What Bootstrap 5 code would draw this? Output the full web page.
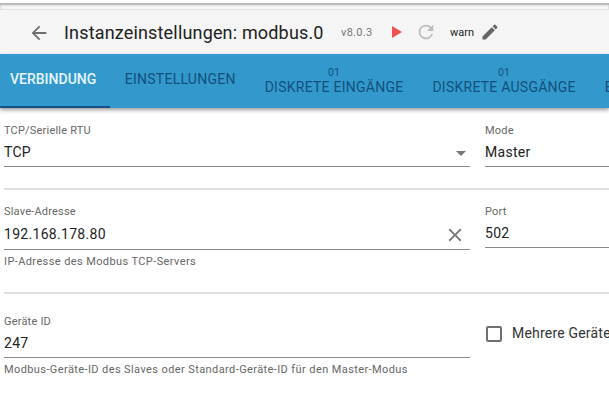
<!DOCTYPE html>
<html lang="de">
<head>
  <meta charset="UTF-8">
  <meta name="viewport" content="width=device-width, initial-scale=1.0">
  <title>Instanzeinstellungen</title>
  <link href="https://cdn.jsdelivr.net/npm/bootstrap@5.3.0/dist/css/bootstrap.min.css" rel="stylesheet">
  <style>
    html, body {
      height: 100%;
      overflow: hidden;
      background: #fff;
      font-family: Roboto, "Liberation Sans", sans-serif;
    }
    .top-strip {
      height: 10px;
      background: #f5f5f5;
      border-top: 3px solid #fff;
      border-bottom: 1px solid #e2e2e2;
      box-shadow: inset 0 2px 2px #b0b0b0;
    }
    .title-bar {
      height: 44px;
      background: #f5f5f5;
      padding-left: 28px;
      color: #212121;
    }
    .back-icon { margin-top: 2px; }
    .title-text { font-size: 18px; letter-spacing: .17px; margin-left: 14px; width: 277px; white-space: nowrap; }
    .version { font-size: 11px; letter-spacing: .3px; color: #777; width: 50px; margin-top: 2px; }
    .reload-icon { margin-left: 12px; }
    .log-level { font-size: 11px; color: #222; margin-left: 13px; margin-top: 2px; }
    .edit-icon { margin-left: 6px; }
    .tab-strip {
      height: 54px;
      background: #3399cc;
      box-shadow: 0 2px 4px rgba(0, 0, 0, .4);
      margin-bottom: 15px;
      white-space: nowrap;
      overflow: hidden;
    }
    .tab-item {
      height: 54px;
      flex: none;
      padding: 0 14.5px;
      font-size: 14px;
      line-height: 16px;
      letter-spacing: .25px;
      text-transform: uppercase;
      color: #14507c;
      text-align: center;
    }
    .tab-item.first-tab {
      padding: 0 14px 0 10px;
      color: #e6f6ff;
      font-weight: 500;
      letter-spacing: 0;
      border-bottom: 2px solid #164f86;
    }
    .tab-num { font-size: 10.5px; line-height: 11px; display: block; padding-top: 13px; margin-bottom: 1px; }
    .tab-plain { padding-top: 17px; display: block; }
    .form-area { padding-left: 4px; }
    .field-left { width: 466px; flex: none; }
    .field-right { width: 140px; margin-left: 15px; flex: none; }
    .field-label { font-size: 11px; line-height: 14px; height: 14px; padding-top: 1px; letter-spacing: .2px; color: #666; display: block; }
    .field-value {
      font-size: 14px;
      line-height: 20px;
      letter-spacing: .3px;
      color: #222;
      border-bottom: 1px solid #8a8a8a;
      height: 30px;
      padding-top: 5px;
    }
    .field-value.has-clear { height: 32px; padding-top: 6px; }
    .field-help { font-size: 11px; line-height: 14px; color: #666; margin-top: 5px; letter-spacing: .4px; }
    .section-line { height: 2px; background: #e0e0e0; border: 0; opacity: 1; margin: 21px 0 14px; }
    .section-line.after-help { margin: 23px 0 20px; }
    .check-field { padding-top: 12px; padding-left: 1px; }
    .check-box {
      width: 16px;
      height: 16px;
      border: 2px solid #707070;
      border-radius: 2px;
      flex: none;
    }
    .check-text { font-size: 14px; line-height: 14px; letter-spacing: .2px; color: #333; margin-left: 10px; white-space: nowrap; }
  </style>
</head>
<body>
  <div class="top-strip"></div>
  <div class="title-bar d-flex align-items-center">
    <svg class="back-icon" width="22" height="22" viewBox="0 0 24 24" fill="#6f6f6f"><path d="M20 11H7.830l5.590-5.590L12 4l-8 8 8 8 1.410-1.410L7.830 13H20v-2z"/></svg>
    <span class="title-text">Instanzeinstellungen: modbus.0</span>
    <span class="version">v8.0.3</span>
    <svg width="12" height="14" viewBox="0 0 12 14" fill="#ef5350"><path d="M1 1l10 6-10 6z"/></svg>
    <svg class="reload-icon" width="22" height="22" viewBox="0 0 24 24" fill="#bdbdbd"><path d="M17.650 6.350A7.960 7.960 0 0 0 12 4a8 8 0 1 0 7.730 10h-2.080A6 6 0 1 1 12 6c1.660 0 3.140.690 4.220 1.780L13 11h7V4l-2.350 2.350z"/></svg>
    <span class="log-level">warn</span>
    <svg class="edit-icon" width="20" height="20" viewBox="0 0 24 24" fill="#666"><path d="M3 17.250V21h3.750L17.810 9.940l-3.750-3.750L3 17.250zM20.710 7.040a1 1 0 0 0 0-1.410l-2.340-2.340a1 1 0 0 0-1.410 0l-1.830 1.830 3.750 3.750 1.830-1.830z"/></svg>
  </div>
  <div class="tab-strip d-flex">
    <div class="tab-item first-tab"><span class="tab-plain">Verbindung</span></div>
    <div class="tab-item"><span class="tab-plain">Einstellungen</span></div>
    <div class="tab-item"><span class="tab-num">01</span>Diskrete Eingänge</div>
    <div class="tab-item"><span class="tab-num">01</span>Diskrete Ausgänge</div>
    <div class="tab-item"><span class="tab-num">01</span>Eingangsregister</div>
  </div>
  <div class="form-area">
    <div class="d-flex">
      <div class="field-left">
        <label class="field-label">TCP/Serielle RTU</label>
        <div class="field-value d-flex justify-content-between">
          <span>TCP</span>
          <svg class="me-1" width="10" height="20" viewBox="0 0 10 20" fill="#777"><path d="M0 9h10l-5 5z"/></svg>
        </div>
      </div>
      <div class="field-right">
        <label class="field-label">Mode</label>
        <div class="field-value">Master</div>
      </div>
    </div>
    <hr class="section-line">
    <div class="d-flex">
      <div class="field-left">
        <label class="field-label">Slave-Adresse</label>
        <div class="field-value has-clear d-flex justify-content-between">
          <span>192.168.178.80</span>
          <svg class="me-1" width="22" height="22" viewBox="0 0 24 24" fill="#777"><path d="M19 6.410 17.590 5 12 10.590 6.410 5 5 6.410 10.590 12 5 17.590 6.410 19 12 13.410 17.590 19 19 17.590 13.410 12z"/></svg>
        </div>
        <div class="field-help">IP-Adresse des Modbus TCP-Servers</div>
      </div>
      <div class="field-right">
        <label class="field-label">Port</label>
        <div class="field-value">502</div>
      </div>
    </div>
    <hr class="section-line after-help">
    <div class="d-flex">
      <div class="field-left">
        <label class="field-label">Geräte ID</label>
        <div class="field-value">247</div>
        <div class="field-help">Modbus-Geräte-ID des Slaves oder Standard-Geräte-ID für den Master-Modus</div>
      </div>
      <div class="field-right check-field d-flex align-items-start">
        <div class="check-box"></div>
        <span class="check-text">Mehrere Geräte</span>
      </div>
    </div>
  </div>
  <script src="https://cdn.jsdelivr.net/npm/bootstrap@5.3.0/dist/js/bootstrap.bundle.min.js"></script>
</body>
</html>
